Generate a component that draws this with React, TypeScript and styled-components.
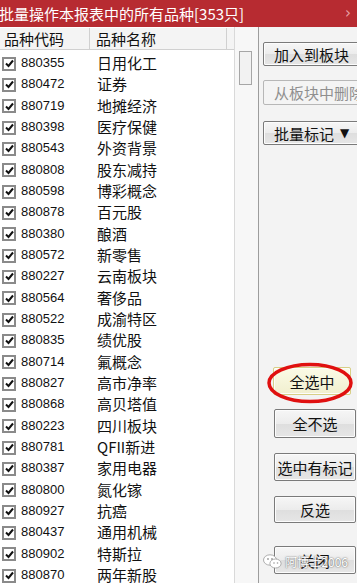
import React from 'react';
import styled, { createGlobalStyle } from 'styled-components';

const GlobalStyle = createGlobalStyle`
  html, body {
    margin: 0;
    padding: 0;
    background: #ffffff;
    overflow: hidden;
  }
`;

const CJK = `"Noto Sans CJK SC", "Noto Sans", sans-serif`;

const rows: [string, string][] = [
  ['880355', '日用化工'],
  ['880472', '证券'],
  ['880719', '地摊经济'],
  ['880398', '医疗保健'],
  ['880543', '外资背景'],
  ['880808', '股东减持'],
  ['880598', '博彩概念'],
  ['880878', '百元股'],
  ['880380', '酿酒'],
  ['880572', '新零售'],
  ['880227', '云南板块'],
  ['880564', '奢侈品'],
  ['880522', '成渝特区'],
  ['880835', '绩优股'],
  ['880714', '氟概念'],
  ['880827', '高市净率'],
  ['880868', '高贝塔值'],
  ['880223', '四川板块'],
  ['880781', 'QFII新进'],
  ['880387', '家用电器'],
  ['880800', '氮化镓'],
  ['880927', '抗癌'],
  ['880437', '通用机械'],
  ['880902', '特斯拉'],
  ['880870', '两年新股'],
];

const Window = styled.div`
  width: 357px;
  height: 583px;
  display: flex;
  flex-direction: column;
  overflow: hidden;
  position: relative;
  font-family: ${CJK};
`;

const TitleBar = styled.div`
  height: 27px;
  flex: none;
  background: #b72b31;
  display: flex;
  align-items: center;
  justify-content: space-between;
  padding: 0 6px 0 0;
  color: #ffffff;
  font-size: 15px;
  line-height: 1;
`;

const TitleText = styled.span`
  margin-left: -1px;
  white-space: nowrap;
`;

const CloseMark = styled.span`
  color: #e9a3a6;
  font-family: "DejaVu Sans", sans-serif;
  font-size: 15px;
`;

const Body = styled.div`
  flex: 1;
  display: flex;
  min-height: 0;
`;

const ListPane = styled.div`
  width: 234px;
  flex: none;
  background: #ffffff;
  display: flex;
  flex-direction: column;
  border-right: 1px solid #d9d9d9;
`;

const HeaderRow = styled.div`
  height: 21px;
  flex: none;
  display: flex;
  background: #f4f4f4;
  border-top: 1px solid #ffffff;
  border-bottom: 1px solid #d0d0d0;
`;

const HeaderCell = styled.div<{ $w: number; $pad: number }>`
  width: ${p => p.$w}px;
  padding-left: ${p => p.$pad}px;
  box-sizing: border-box;
  border-right: 1px solid #d0d0d0;
  font-size: 15px;
  line-height: 21px;
  color: #111111;
  white-space: nowrap;
`;

const Rows = styled.div`
  padding-top: 2px;
`;

const Row = styled.div`
  height: 21.33px;
  display: flex;
  align-items: center;
`;

const Check = styled.span`
  width: 14px;
  height: 14px;
  flex: none;
  box-sizing: border-box;
  margin-left: 2px;
  margin-top: 2px;
  border: 2px solid #8a8a8a;
  background: #ffffff;
  display: flex;
  align-items: center;
  justify-content: center;
`;

const Code = styled.span`
  width: 76px;
  margin-left: 5px;
  font-family: "Liberation Sans", Arial, sans-serif;
  font-size: 13px;
  color: #111111;
`;

const Name = styled.span`
  font-size: 15px;
  color: #111111;
  white-space: nowrap;
`;

const ScrollTrack = styled.div`
  width: 23px;
  flex: none;
  background: #f7f7f7;
`;

const Thumb = styled.div`
  margin: 24px 0 0 4px;
  width: 13px;
  height: 34px;
  box-sizing: border-box;
  border: 1px solid #a6a6a6;
  background: #f2f2f2;
`;

const Panel = styled.div`
  flex: 1;
  background: #f3f3f3;
  border-left: 1px solid #9d9d9d;
  display: flex;
  flex-direction: column;
  overflow: hidden;
  position: relative;
`;

const Button = styled.div<{ $mt: number; $left: number; $w: number; $h: number; $disabled?: boolean; $hot?: boolean }>`
  flex: none;
  margin-top: ${p => p.$mt}px;
  margin-left: ${p => p.$left}px;
  width: ${p => p.$w}px;
  height: ${p => p.$h}px;
  box-sizing: border-box;
  border: 1px solid ${p => (p.$disabled ? '#b7b7b7' : p.$hot ? '#d8cf86' : '#7a7a7a')};
  border-radius: 2px;
  background: ${p =>
    p.$disabled
      ? '#f4f4f4'
      : p.$hot
      ? 'linear-gradient(#fbfbe6, #f1efcf)'
      : 'linear-gradient(#f6f6f6 0%, #ececec 50%, #dedede 51%, #e6e6e6 100%)'};
  box-shadow: inset 0 0 0 1px ${p => (p.$disabled ? '#f4f4f4' : '#fcfcfc')};
  color: ${p => (p.$disabled ? '#8f8f8f' : '#111111')};
  font-size: 15px;
  display: flex;
  align-items: center;
  justify-content: ${p => (p.$left < 8 ? 'flex-start' : 'center')};
  padding-left: ${p => (p.$left < 8 ? 10 : 0)}px;
  white-space: nowrap;
  position: relative;
`;

const Arrow = styled.span`
  margin-left: 6px;
  font-size: 12px;
  font-family: "DejaVu Sans", sans-serif;
`;

const Ring = styled.svg`
  position: absolute;
  left: -7px;
  top: -6px;
  width: 86px;
  height: 42px;
  overflow: visible;
  pointer-events: none;
`;

const Watermark = styled.div`
  position: absolute;
  right: 9px;
  bottom: 13px;
  display: flex;
  align-items: center;
  gap: 3px;
  color: #ffffff;
  font-size: 12px;
  text-shadow: 0 0 2px #777777, 0 0 1px #777777;
  font-family: ${CJK};
`;

function CheckMark() {
  return (
    <svg width="9" height="9" viewBox="0 0 9 9">
      <path d="M1 4.5 L3.5 7 L8 1.5" fill="none" stroke="#111" strokeWidth="2" />
    </svg>
  );
}

function WeChat() {
  return (
    <svg width="19" height="15" viewBox="0 0 19 15">
      <ellipse cx="7" cy="6" rx="6.5" ry="5.2" fill="#ffffff" stroke="#9a9a9a" strokeWidth="0.8" />
      <ellipse cx="12.5" cy="9.5" rx="5.6" ry="4.5" fill="#ffffff" stroke="#9a9a9a" strokeWidth="0.8" />
      <circle cx="5" cy="5" r="0.9" fill="#9a9a9a" />
      <circle cx="9" cy="5" r="0.9" fill="#9a9a9a" />
      <circle cx="11" cy="9" r="0.8" fill="#9a9a9a" />
      <circle cx="14.5" cy="9" r="0.8" fill="#9a9a9a" />
    </svg>
  );
}

export default function App() {
  return (
    <Window>
      <GlobalStyle />
      <TitleBar>
        <TitleText>批量操作本报表中的所有品种[353只]</TitleText>
        <CloseMark>›</CloseMark>
      </TitleBar>
      <Body>
        <ListPane>
          <HeaderRow>
            <HeaderCell $w={90} $pad={4}>品种代码</HeaderCell>
            <HeaderCell $w={137} $pad={6}>品种名称</HeaderCell>
          </HeaderRow>
          <Rows>
            {rows.map(([code, name]) => (
              <Row key={code}>
                <Check>
                  <CheckMark />
                </Check>
                <Code>{code}</Code>
                <Name>{name}</Name>
              </Row>
            ))}
          </Rows>
        </ListPane>
        <ScrollTrack>
          <Thumb />
        </ScrollTrack>
        <Panel>
          <Button $mt={15} $left={4} $w={100} $h={24}>加入到板块</Button>
          <Button $mt={14} $left={4} $w={100} $h={25} $disabled>从板块中删除</Button>
          <Button $mt={16} $left={4} $w={100} $h={24}>
            批量标记<Arrow>▼</Arrow>
          </Button>
          <Button $mt={222} $left={14} $w={78} $h={28} $hot>
            全选中
            <Ring viewBox="0 0 86 42">
              <ellipse cx="43" cy="21" rx="41" ry="18.5" fill="none" stroke="#e01010" strokeWidth="3.5" />
            </Ring>
          </Button>
          <Button $mt={14} $left={15} $w={82} $h={29}>全不选</Button>
          <Button $mt={15} $left={15} $w={82} $h={28}>选中有标记</Button>
          <Button $mt={15} $left={15} $w={82} $h={27}>反选</Button>
          <Button $mt={23} $left={15} $w={82} $h={28}>关闭</Button>
          <Watermark>
            <WeChat />
            <span>阿博士2006</span>
          </Watermark>
        </Panel>
      </Body>
    </Window>
  );
}
